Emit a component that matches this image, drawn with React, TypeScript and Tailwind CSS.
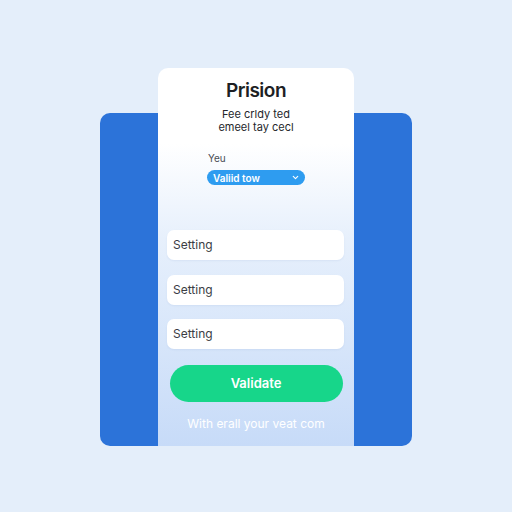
import { ChevronDown } from 'lucide-react';

const FIELDS = ['Setting', 'Setting', 'Setting'];

export default function App() {
  return (
    <div
      className="w-[512px] h-[512px] bg-[#e4eefa] pt-[68px] pl-[100px]"
      style={{ fontFamily: 'Inter, "Noto Sans", sans-serif' }}
    >
      {/* blue backdrop and form card share one grid cell */}
      <div className="grid w-[312px] h-[378px]">
        <div className="col-start-1 row-start-1 mt-[45px] rounded-[10px] bg-[#2c73d9]" />

        <div className="col-start-1 row-start-1 mx-[58px] rounded-t-[10px] bg-gradient-to-b from-white from-[20%] via-[#e7f0fc] via-[45%] to-[#c7dbf8] flex flex-col items-center pt-[11px]">
          <h1 className="text-[19px] leading-6 font-semibold text-[#1d1f24] tracking-tight">
            Prision
          </h1>
          <div className="mt-[5px] flex flex-col items-center text-[11px] leading-[13px] text-[#25272c]">
            <span>Fee crldy ted</span>
            <span>emeel tay cecl</span>
          </div>

          <div className="mt-[18px] w-[98px] flex flex-col">
            <span className="text-[10px] leading-[12px] text-[#4a4d55] pl-[1px]">Yeu</span>
            <div className="mt-[6px] h-[15px] rounded-full bg-[#2e9cf0] flex items-center justify-between pl-[6px] pr-[5px]">
              <span className="text-[10px] font-semibold text-white leading-none">Valiid tow</span>
              <ChevronDown className="w-[9px] h-[9px] text-white" strokeWidth={3} />
            </div>
          </div>

          <div className="mt-[45px] w-full pl-[9px] pr-[10px] flex flex-col gap-[14.5px]">
            {FIELDS.map((f, i) => (
              <div
                key={i}
                className="h-[30px] rounded-[7px] bg-white flex items-center pl-[6px] text-[12px] text-[#3a3d44] shadow-[0_1px_2px_rgba(60,100,170,0.08)]"
              >
                {f}
              </div>
            ))}
          </div>

          <button className="mt-[16px] w-[173px] h-[37px] rounded-full bg-[#17d68a] text-white text-[13px] font-semibold">
            Validate
          </button>

          <p className="mt-[14px] text-[12px] leading-4 text-white">With erall your veat com</p>
        </div>
      </div>
    </div>
  );
}
